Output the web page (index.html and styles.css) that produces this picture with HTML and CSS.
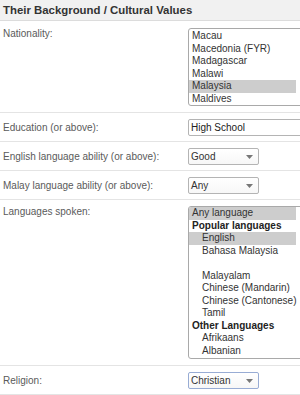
FILE: index.html
```html
<!DOCTYPE html>
<html lang="en">
<head>
  <meta charset="UTF-8">
  <meta name="viewport" content="width=device-width, initial-scale=1.0">
  <title>Their Background</title>
  <link rel="stylesheet" href="styles.css">
</head>
<body>
  <div class="section">
    <h2 class="section-title">Their Background / Cultural Values</h2>

    <div class="row row-nationality">
      <div class="label">Nationality:</div>
      <div class="listbox listbox-short">
        <ul class="options options-scrolled">
          <li>Luxembourg</li>
          <li>Macau</li>
          <li>Macedonia (FYR)</li>
          <li>Madagascar</li>
          <li>Malawi</li>
          <li class="selected">Malaysia</li>
          <li>Maldives</li>
        </ul>
      </div>
    </div>

    <div class="row row-single">
      <div class="label">Education (or above):</div>
      <div class="text-input">High School</div>
    </div>

    <div class="row row-single">
      <div class="label">English language ability (or above):</div>
      <div class="select">
        <span>Good</span>
        <svg class="arrow" width="7" height="4" viewBox="0 0 7 4"><polygon points="0,0 7,0 3.5,4" fill="#777"/></svg>
      </div>
    </div>

    <div class="row row-single">
      <div class="label">Malay language ability (or above):</div>
      <div class="select">
        <span>Any</span>
        <svg class="arrow" width="7" height="4" viewBox="0 0 7 4"><polygon points="0,0 7,0 3.5,4" fill="#777"/></svg>
      </div>
    </div>

    <div class="row row-languages">
      <div class="label">Languages spoken:</div>
      <div class="listbox listbox-tall">
        <ul class="options">
          <li class="selected">Any language</li>
          <li class="group">Popular languages</li>
          <li class="sub selected">English</li>
          <li class="sub">Bahasa Malaysia</li>
          <li class="sub">&nbsp;</li>
          <li class="sub">Malayalam</li>
          <li class="sub">Chinese (Mandarin)</li>
          <li class="sub">Chinese (Cantonese)</li>
          <li class="sub">Tamil</li>
          <li class="group">Other Languages</li>
          <li class="sub">Afrikaans</li>
          <li class="sub">Albanian</li>
        </ul>
      </div>
    </div>

    <div class="row row-single">
      <div class="label">Religion:</div>
      <div class="select select-focus">
        <span>Christian</span>
        <svg class="arrow" width="7" height="4" viewBox="0 0 7 4"><polygon points="0,0 7,0 3.5,4" fill="#777"/></svg>
      </div>
    </div>
  </div>
</body>
</html>
```

FILE: styles.css
```css
/* Reset */
* {
  margin: 0;
  padding: 0;
  box-sizing: border-box;
}

html, body {
  height: 100%;
  overflow: hidden;
  background: #fff;
  font-family: 'Liberation Sans', Arial, sans-serif;
  font-size: 10px;
  color: #555;
}

/* Section header */
.section-title {
  height: 21px;
  line-height: 20px;
  padding-left: 3px;
  font-size: 11.4px;
  font-weight: bold;
  color: #333;
  background: #f1f1f1;
  border-bottom: 1px solid #dcdcdc;
  white-space: nowrap;
}

/* Form rows */
.row {
  display: flex;
  align-items: flex-start;
  padding: 6px 0 5px 3px;
  border-bottom: 1px solid #e4e4e4;
  white-space: nowrap;
}

.row-single {
  align-items: center;
}

.row-nationality {
  padding: 7px 0 6px 3px;
}

.row-languages {
  padding: 6px 0 6px 3px;
}

.label {
  flex: 0 0 185px;
  line-height: 12px;
  color: #5a5a5a;
}

/* Text input */
.text-input {
  flex: none;
  width: 126px;
  height: 17px;
  line-height: 15px;
  padding-left: 2px;
  border: 1px solid #b4b4b4;
  border-radius: 2px;
  color: #222;
  background: #fff;
}

/* Drop-down */
.select {
  flex: none;
  display: flex;
  align-items: center;
  justify-content: space-between;
  width: 71px;
  height: 17px;
  padding: 0 5px 0 2px;
  border: 1px solid #b4b4b4;
  border-radius: 2px;
  color: #333;
  background: linear-gradient(#fff, #f7f7f7);
}

.select-focus {
  border-color: #98acd4;
}

.select .arrow {
  display: block;
}

/* List boxes */
.listbox {
  flex: none;
  width: 126px;
  border: 1px solid #a9a9a9;
  border-radius: 3px;
  background: #fff;
  overflow: hidden;
}

.listbox-short {
  height: 78px;
}

.listbox-tall {
  height: 153px;
}

.options {
  list-style: none;
  margin-right: 17px;
}

.options-scrolled {
  margin-top: -11.5px;
}

.options li {
  height: 12.55px;
  line-height: 12.55px;
  padding-left: 3px;
  color: #333;
}

.options li.group {
  font-weight: bold;
  color: #222;
}

.options li.sub {
  padding-left: 13px;
}

.options li.selected {
  background: #cdcdcd;
}
```
